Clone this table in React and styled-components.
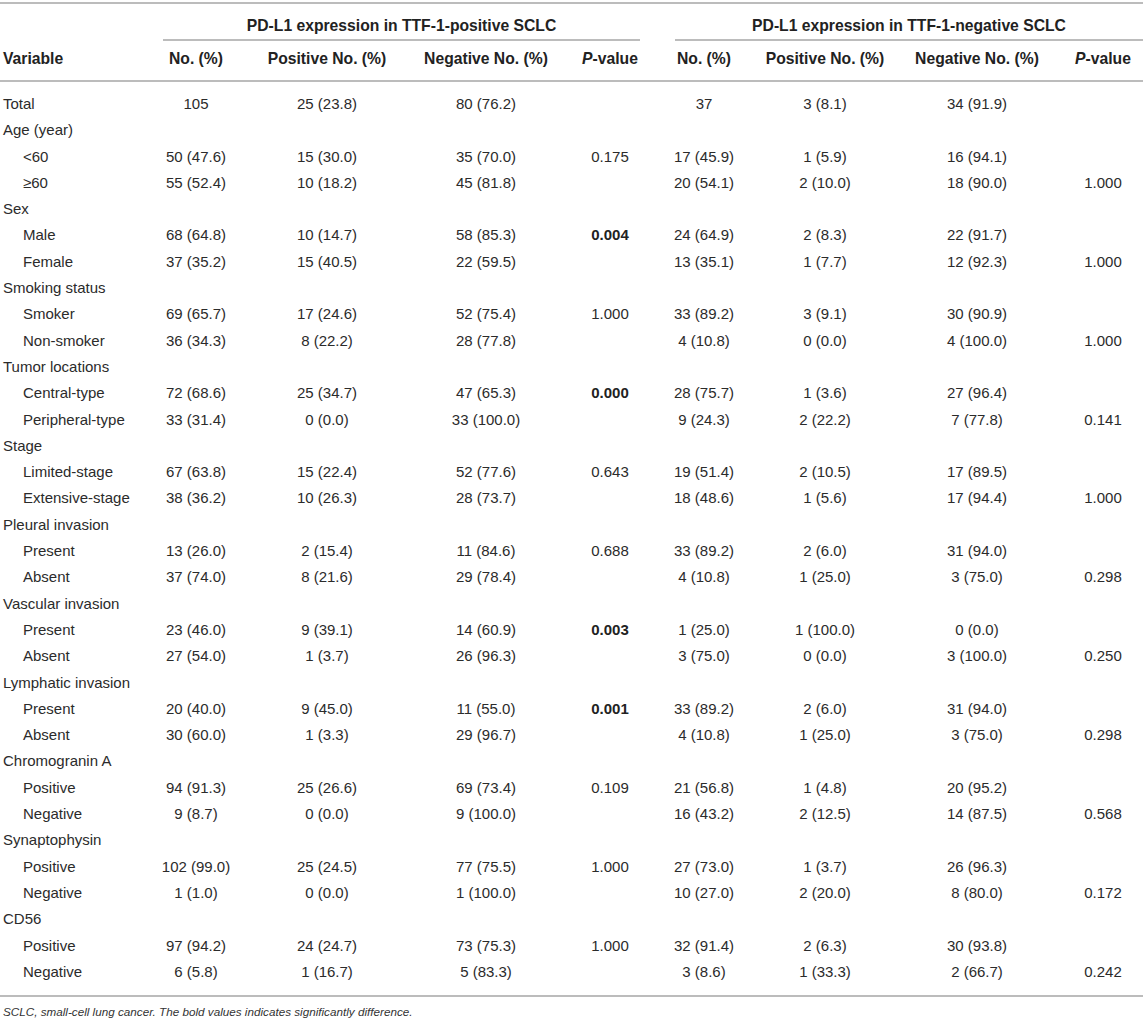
import React from "react";
import styled, { createGlobalStyle } from "styled-components";

const Global = createGlobalStyle`
  html, body { margin: 0; padding: 0; background: #fff; }
  body { font-family: "Liberation Sans", Arial, Helvetica, sans-serif; color: #2b2b2b; }
`;

const Page = styled.div`
  width: 1143px;
  padding-top: 2px;
`;

const Table = styled.table`
  width: 1143px;
  table-layout: fixed;
  border-collapse: separate;
  border-spacing: 0;
  font-size: 15px;
`;

const HeadCell = styled.th`
  font-weight: bold;
  font-size: 15.7px;
  color: #222;
  line-height: 18px;
  white-space: nowrap;
  text-align: ${(p) => (p.$left ? "left" : "center")};
  padding: ${(p) => (p.$top ? "13px 0 0 0" : "9px 0 12px 0")};
  padding-left: ${(p) => (p.$left ? "3px" : "0")};
  vertical-align: ${(p) => (p.$top ? "top" : "bottom")};
  border-top: ${(p) => (p.$top ? "2px solid #bcbcbc" : "none")};
  border-bottom: ${(p) => (p.$top ? "none" : "2px solid #bcbcbc")};
`;

const VarHead = styled(HeadCell)`
  border-top: 2px solid #bcbcbc;
  border-bottom: 2px solid #bcbcbc;
  padding: 0 0 12px 3px;
`;

const GroupLabel = styled.div`
  padding-bottom: 4px;
  margin-left: ${(p) => p.$ml}px;
  margin-right: ${(p) => p.$mr}px;
  border-bottom: 2px solid #bcbcbc;
`;

const Cell = styled.td`
  line-height: 18.3px;
  padding: ${(p) => (p.$first ? "13px" : "4px")} 0 ${(p) => (p.$last ? "14px" : "4px")} 0;
  text-align: center;
  white-space: nowrap;
  font-weight: ${(p) => (p.$bold ? "bold" : "normal")};
  color: ${(p) => (p.$bold ? "#222" : "#2b2b2b")};
  border-bottom: ${(p) => (p.$last ? "2px solid #bcbcbc" : "none")};
`;

const LabelCell = styled(Cell)`
  text-align: left;
  padding-left: ${(p) => (p.$sub ? "23px" : "3px")};
`;

const Footnote = styled.p`
  margin: 0;
  padding: 8px 0 0 3px;
  font-size: 11.7px;
  line-height: 14px;
  font-style: italic;
  color: #333;
`;

const widths = [139, 114, 148, 170, 78, 110, 132, 172, 80];

const rows = [
  ["Total", false, "105", "25 (23.8)", "80 (76.2)", "", "37", "3 (8.1)", "34 (91.9)", ""],
  ["Age (year)", false],
  ["<60", true, "50 (47.6)", "15 (30.0)", "35 (70.0)", "0.175", "17 (45.9)", "1 (5.9)", "16 (94.1)", ""],
  ["≥60", true, "55 (52.4)", "10 (18.2)", "45 (81.8)", "", "20 (54.1)", "2 (10.0)", "18 (90.0)", "1.000"],
  ["Sex", false],
  ["Male", true, "68 (64.8)", "10 (14.7)", "58 (85.3)", "*0.004", "24 (64.9)", "2 (8.3)", "22 (91.7)", ""],
  ["Female", true, "37 (35.2)", "15 (40.5)", "22 (59.5)", "", "13 (35.1)", "1 (7.7)", "12 (92.3)", "1.000"],
  ["Smoking status", false],
  ["Smoker", true, "69 (65.7)", "17 (24.6)", "52 (75.4)", "1.000", "33 (89.2)", "3 (9.1)", "30 (90.9)", ""],
  ["Non-smoker", true, "36 (34.3)", "8 (22.2)", "28 (77.8)", "", "4 (10.8)", "0 (0.0)", "4 (100.0)", "1.000"],
  ["Tumor locations", false],
  ["Central-type", true, "72 (68.6)", "25 (34.7)", "47 (65.3)", "*0.000", "28 (75.7)", "1 (3.6)", "27 (96.4)", ""],
  ["Peripheral-type", true, "33 (31.4)", "0 (0.0)", "33 (100.0)", "", "9 (24.3)", "2 (22.2)", "7 (77.8)", "0.141"],
  ["Stage", false],
  ["Limited-stage", true, "67 (63.8)", "15 (22.4)", "52 (77.6)", "0.643", "19 (51.4)", "2 (10.5)", "17 (89.5)", ""],
  ["Extensive-stage", true, "38 (36.2)", "10 (26.3)", "28 (73.7)", "", "18 (48.6)", "1 (5.6)", "17 (94.4)", "1.000"],
  ["Pleural invasion", false],
  ["Present", true, "13 (26.0)", "2 (15.4)", "11 (84.6)", "0.688", "33 (89.2)", "2 (6.0)", "31 (94.0)", ""],
  ["Absent", true, "37 (74.0)", "8 (21.6)", "29 (78.4)", "", "4 (10.8)", "1 (25.0)", "3 (75.0)", "0.298"],
  ["Vascular invasion", false],
  ["Present", true, "23 (46.0)", "9 (39.1)", "14 (60.9)", "*0.003", "1 (25.0)", "1 (100.0)", "0 (0.0)", ""],
  ["Absent", true, "27 (54.0)", "1 (3.7)", "26 (96.3)", "", "3 (75.0)", "0 (0.0)", "3 (100.0)", "0.250"],
  ["Lymphatic invasion", false],
  ["Present", true, "20 (40.0)", "9 (45.0)", "11 (55.0)", "*0.001", "33 (89.2)", "2 (6.0)", "31 (94.0)", ""],
  ["Absent", true, "30 (60.0)", "1 (3.3)", "29 (96.7)", "", "4 (10.8)", "1 (25.0)", "3 (75.0)", "0.298"],
  ["Chromogranin A", false],
  ["Positive", true, "94 (91.3)", "25 (26.6)", "69 (73.4)", "0.109", "21 (56.8)", "1 (4.8)", "20 (95.2)", ""],
  ["Negative", true, "9 (8.7)", "0 (0.0)", "9 (100.0)", "", "16 (43.2)", "2 (12.5)", "14 (87.5)", "0.568"],
  ["Synaptophysin", false],
  ["Positive", true, "102 (99.0)", "25 (24.5)", "77 (75.5)", "1.000", "27 (73.0)", "1 (3.7)", "26 (96.3)", ""],
  ["Negative", true, "1 (1.0)", "0 (0.0)", "1 (100.0)", "", "10 (27.0)", "2 (20.0)", "8 (80.0)", "0.172"],
  ["CD56", false],
  ["Positive", true, "97 (94.2)", "24 (24.7)", "73 (75.3)", "1.000", "32 (91.4)", "2 (6.3)", "30 (93.8)", ""],
  ["Negative", true, "6 (5.8)", "1 (16.7)", "5 (83.3)", "", "3 (8.6)", "1 (33.3)", "2 (66.7)", "0.242"],
];

const PVal = () => (
  <>
    <em>P</em>-value
  </>
);

const subHeads = ["No. (%)", "Positive No. (%)", "Negative No. (%)", "P", "No. (%)", "Positive No. (%)", "Negative No. (%)", "P"];

export default function App() {
  const n = rows.length;
  return (
    <Page>
      <Global />
      <Table>
        <colgroup>
          {widths.map((w, i) => (
            <col key={i} style={{ width: w }} />
          ))}
        </colgroup>
        <thead>
          <tr>
            <VarHead rowSpan={2} $left>
              Variable
            </VarHead>
            <HeadCell colSpan={4} $top>
              <GroupLabel $ml={24} $mr={9}>PD-L1 expression in TTF-1-positive SCLC</GroupLabel>
            </HeadCell>
            <HeadCell colSpan={4} $top>
              <GroupLabel $ml={26} $mr={0}>PD-L1 expression in TTF-1-negative SCLC</GroupLabel>
            </HeadCell>
          </tr>
          <tr>
            {subHeads.map((h, i) => (
              <HeadCell key={i}>{h === "P" ? <PVal /> : h}</HeadCell>
            ))}
          </tr>
        </thead>
        <tbody>
          {rows.map((r, ri) => {
            const first = ri === 0;
            const last = ri === n - 1;
            const vals = r.length > 2 ? r.slice(2) : ["", "", "", "", "", "", "", ""];
            return (
              <tr key={ri}>
                <LabelCell $sub={r[1]} $first={first} $last={last}>
                  {r[0]}
                </LabelCell>
                {vals.map((v, vi) => {
                  const bold = v.startsWith("*");
                  return (
                    <Cell key={vi} $bold={bold} $first={first} $last={last}>
                      {bold ? v.slice(1) : v}
                    </Cell>
                  );
                })}
              </tr>
            );
          })}
        </tbody>
      </Table>
      <Footnote>SCLC, small-cell lung cancer. The bold values indicates significantly difference.</Footnote>
    </Page>
  );
}
